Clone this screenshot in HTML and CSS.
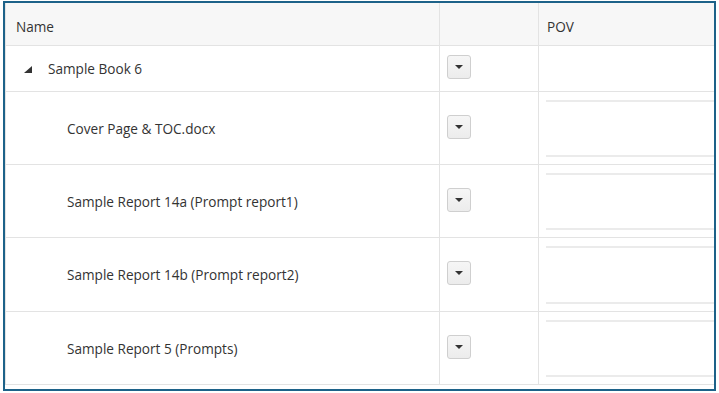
FILE: index.html
```html
<!DOCTYPE html>
<html lang="en">
<head>
  <meta charset="UTF-8" />
  <title>Book Contents</title>
  <link rel="stylesheet" href="styles.css">
</head>
<body>
  <div class="frame">
    <div class="grid">
      <!-- header -->
      <div class="cell head name">Name</div>
      <div class="cell head"></div>
      <div class="cell head pov-head">POV</div>

      <!-- book row -->
      <div class="cell book name">
        <span class="twisty"></span>Sample Book 6
      </div>
      <div class="cell book act"><button class="drop"><span class="caret"></span></button></div>
      <div class="cell book"></div>

      <div class="cell doc name child">Cover Page &amp; TOC.docx</div>
      <div class="cell doc act"><button class="drop"><span class="caret"></span></button></div>
      <div class="cell doc pov"><div class="pov-box"></div></div>

      <div class="cell doc name child">Sample Report 14a (Prompt report1)</div>
      <div class="cell doc act"><button class="drop"><span class="caret"></span></button></div>
      <div class="cell doc pov"><div class="pov-box"></div></div>

      <div class="cell doc name child">Sample Report 14b (Prompt report2)</div>
      <div class="cell doc act"><button class="drop"><span class="caret"></span></button></div>
      <div class="cell doc pov"><div class="pov-box"></div></div>

      <div class="cell doc name child">Sample Report 5 (Prompts)</div>
      <div class="cell doc act"><button class="drop"><span class="caret"></span></button></div>
      <div class="cell doc pov"><div class="pov-box"></div></div>
    </div>
  </div>
</body>
</html>
```
FILE: styles.css
```css
body { margin: 0; background: #fff; font-family: "Open Sans", "Noto Sans", sans-serif; font-size: 13.6px; color: #333; }

.frame { margin: 1px 3px 0; height: 386px; border: 2px solid #1d6289; overflow: hidden; }
.grid { display: grid; grid-template-columns: 434px 99px 1fr; grid-template-rows: 43px 46px 73px 73px 74px 73px; border-left: 1px solid #e3e3e3; }

.cell { display: flex; align-items: center; border-bottom: 1px solid #e3e3e3; border-right: 1px solid #e3e3e3; box-sizing: border-box; }
.cell:nth-child(3n) { border-right: none; }

.head { background: #f7f7f7; padding-top: 5px; }
.head.name { padding-left: 10px; }
.pov-head { padding-left: 8px; }

.book.name { padding-left: 18px; }
.twisty { width: 0; height: 0; border-left: 8px solid transparent; border-bottom: 7px solid #333; margin: 2px 16px 0 0; }
.child { padding-left: 61px; }

.act { padding-left: 7px; }
.drop { width: 24px; height: 24px; margin: 0 0 3px; padding: 0; border: 1px solid #cfcfcf; border-radius: 3px; background: linear-gradient(#f6f6f6, #ececec); display: flex; align-items: center; justify-content: center; }
.caret { width: 0; height: 0; border-left: 4px solid transparent; border-right: 4px solid transparent; border-top: 4px solid #333; }

.pov { align-items: stretch; padding: 8px 0 7px 7px; }
.pov-box { flex: 1; border-top: 2px solid #ebebeb; border-bottom: 2px solid #ebebeb; }
```
